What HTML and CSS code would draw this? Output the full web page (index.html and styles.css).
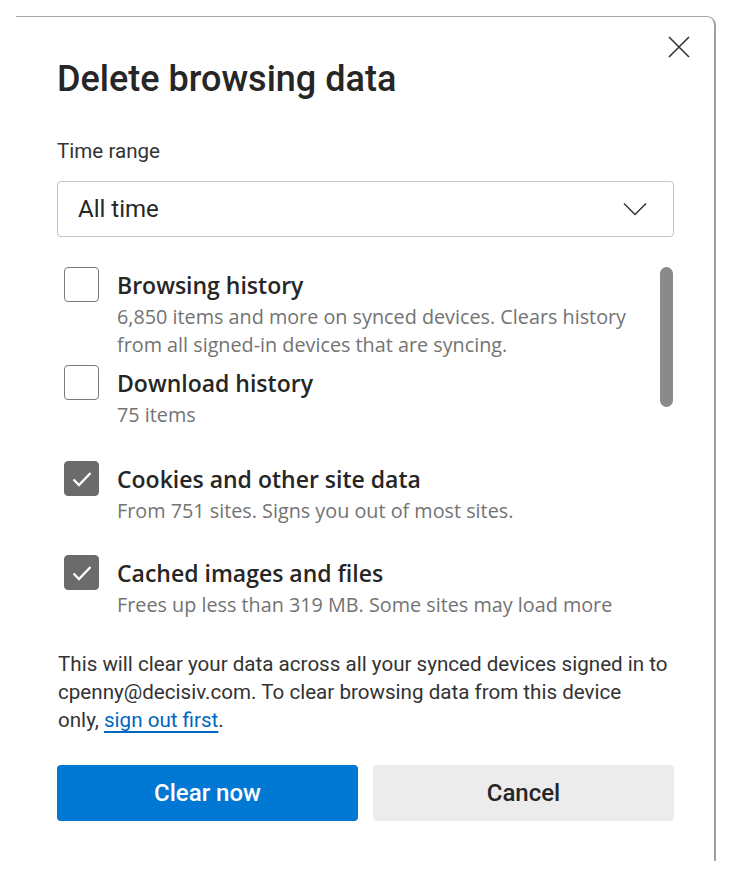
FILE: index.html
```html
<!DOCTYPE html>
<html lang="en">
<head>
<meta charset="utf-8">
<title>Delete browsing data</title>
<link rel="stylesheet" href="styles.css">
</head>
<body>
<div class="dialog">
  <div class="header">
    <h1 class="title">Delete browsing data</h1>
    <button class="close" aria-label="Close">
      <svg width="22" height="22" viewBox="0 0 22 22"><path d="M1 1 L21 21 M21 1 L1 21" stroke="#333" stroke-width="1.6" fill="none"/></svg>
    </button>
  </div>
  <div class="label">Time range</div>
  <div class="select">
    <span>All time</span>
    <svg width="24" height="14" viewBox="0 0 24 14"><path d="M1 1.5 L12 12.5 L23 1.5" stroke="#333" stroke-width="1.5" fill="none"/></svg>
  </div>
  <div class="scroll">
    <div class="list">
      <div class="item">
        <span class="box"></span>
        <div class="text">
          <div class="name">Browsing history</div>
          <div class="desc">6,850 items and more on synced devices. Clears history from all signed-in devices that are syncing.</div>
        </div>
      </div>
      <div class="item">
        <span class="box"></span>
        <div class="text">
          <div class="name">Download history</div>
          <div class="desc">75 items</div>
        </div>
      </div>
      <div class="item">
        <span class="box checked"><svg width="22" height="18" viewBox="0 0 22 18"><path d="M2.5 9.5 L8 15 L19.5 3" stroke="#fff" stroke-width="2.3" fill="none"/></svg></span>
        <div class="text">
          <div class="name">Cookies and other site data</div>
          <div class="desc">From 751 sites. Signs you out of most sites.</div>
        </div>
      </div>
      <div class="item">
        <span class="box checked"><svg width="22" height="18" viewBox="0 0 22 18"><path d="M2.5 9.5 L8 15 L19.5 3" stroke="#fff" stroke-width="2.3" fill="none"/></svg></span>
        <div class="text">
          <div class="name">Cached images and files</div>
          <div class="desc">Frees up less than 319 MB. Some sites may load more</div>
        </div>
      </div>
    </div>
    <div class="track"><div class="thumb"></div></div>
  </div>
  <p class="note">This will clear your data across all your synced devices signed in to cpenny@decisiv.com. To clear browsing data from this device<br>only, <a href="#">sign out first</a>.</p>
  <div class="buttons">
    <button class="btn primary">Clear now</button>
    <button class="btn secondary">Cancel</button>
  </div>
</div>
</body>
</html>
```

FILE: styles.css
```css
* { box-sizing: border-box; }
html, body { margin: 0; padding: 0; background: #fff; }
body { font-family: Roboto, "Noto Sans", sans-serif; color: #262626; }

.dialog {
  margin: 16px 0 0 16px;
  width: 700px;
  height: 845px;
  background: #fff;
  border-top: 1px solid #a6a6a6;
  border-right: 2px solid #a0a0a0;
  border-top-right-radius: 9px;
  padding: 0 40px 0 41px;
  display: flex;
  flex-direction: column;
}

.header {
  display: flex;
  justify-content: space-between;
  align-items: flex-start;
}
.title {
  margin: 40px 0 0 0;
  font-size: 36px;
  line-height: 44px;
  font-weight: 500;
  color: #262626;
}
.close {
  margin: 19px -16px 0 0;
  width: 22px;
  height: 22px;
  padding: 0;
  border: 0;
  background: none;
  display: flex;
}

.label {
  margin-top: 36px;
  font-size: 20.6px;
  line-height: 28px;
  color: #333;
}

.select {
  margin-top: 16px;
  height: 56px;
  border: 1px solid #c4c4c4;
  border-radius: 4px;
  display: flex;
  align-items: center;
  justify-content: space-between;
  padding: 0 26px 0 20px;
  font-size: 24px;
  color: #262626;
}

.scroll {
  margin-top: 30px;
  height: 360px;
  display: flex;
  overflow: hidden;
}
.list { flex: 1; }
.item {
  display: flex;
  min-height: 96px;
}
.item:first-child { min-height: 98px; }
.item:nth-child(3) { min-height: 94px; }
.box {
  flex: none;
  margin-left: 7px;
  width: 35px;
  height: 35px;
  border: 1px solid #7a7a7a;
  border-radius: 4px;
  display: flex;
  align-items: center;
  justify-content: center;
}
.box.checked {
  background: #6b6b6b;
  border-color: #6b6b6b;
}
.text {
  margin-left: 18px;
  margin-top: 3px;
  font-family: "Open Sans", "Noto Sans", sans-serif;
}
.name {
  font-size: 23px;
  line-height: 30px;
  font-weight: 600;
  color: #262626;
}
.desc {
  margin-top: 3px;
  font-size: 19.8px;
  line-height: 28px;
  color: #737373;
  max-width: 530px;
}
.track {
  flex: none;
  width: 14px;
  margin-left: 6px;
}
.thumb {
  width: 13px;
  height: 140px;
  border-radius: 7px;
  background: #8a8a8a;
}

.note {
  margin: 23px 0 0 1px;
  font-size: 20.6px;
  line-height: 28px;
  color: #333;
}
.note a { color: #0067c0; text-decoration: underline; text-underline-offset: 4px; }

.buttons {
  margin-top: 31px;
  display: flex;
  gap: 15px;
}
.btn {
  flex: 1;
  height: 56px;
  border: 0;
  border-radius: 4px;
  font-family: Roboto, "Noto Sans", sans-serif;
  font-size: 24px;
  font-weight: 500;
}
.primary { background: #0078d4; color: #fff; }
.secondary { background: #ececec; color: #262626; }
```
